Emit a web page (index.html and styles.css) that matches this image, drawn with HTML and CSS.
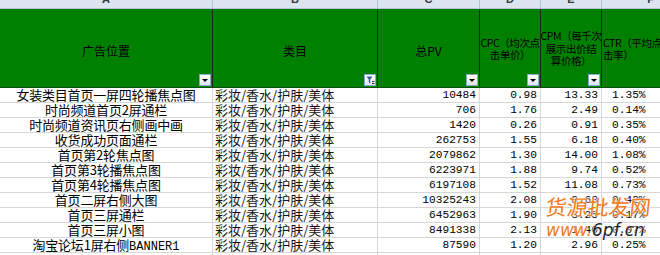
FILE: index.html
```html
<!DOCTYPE html>
<html lang="zh">
<head>
<meta charset="utf-8">
<link rel="stylesheet" href="styles.css">
</head>
<body>
<div class="sheet">
  <div class="colbar">
    <div class="colbar-inner">
      <div class="cl">A</div><div class="cl">B</div><div class="cl">C</div><div class="cl">D</div><div class="cl">E</div><div class="cl">F</div>
    </div>
  </div>
  <div class="row head">
    <div class="hc big">广告位置<span class="btn"><i class="tri"></i></span></div>
    <div class="hc big">类目<span class="btn"><svg width="9" height="9" viewBox="0 0 9 9"><path d="M0.5 0.5h6l-2.3 3v4l-1.4-1v-3z" fill="#3b5d8c"/><rect x="6" y="5" width="2.5" height="1" fill="#333"/><rect x="6" y="7" width="2.5" height="1" fill="#333"/></svg></span></div>
    <div class="hc big">总PV<span class="btn"><i class="tri"></i></span></div>
    <div class="hc small">CPC（均次点<br>击单价）<span class="btn"><i class="tri"></i></span></div>
    <div class="hc small">CPM（每千次<br>展示出价结<br>算价格）<span class="btn"><i class="tri"></i></span></div>
    <div class="hc small left">CTR（平均点<br>击率）<span class="btn"><i class="tri"></i></span></div>
  </div>
  <div class="row"><div class="c a">女装类目首页一屏四轮播焦点图</div><div class="c b">彩妆/香水/护肤/美体</div><div class="c n">10484</div><div class="c n">0.98</div><div class="c n">13.33</div><div class="c n f">1.35%</div></div>
  <div class="row"><div class="c a">时尚频道首页2屏通栏</div><div class="c b">彩妆/香水/护肤/美体</div><div class="c n">706</div><div class="c n">1.76</div><div class="c n">2.49</div><div class="c n f">0.14%</div></div>
  <div class="row"><div class="c a">时尚频道资讯页右侧画中画</div><div class="c b">彩妆/香水/护肤/美体</div><div class="c n">1420</div><div class="c n">0.26</div><div class="c n">0.91</div><div class="c n f">0.35%</div></div>
  <div class="row"><div class="c a">收货成功页面通栏</div><div class="c b">彩妆/香水/护肤/美体</div><div class="c n">262753</div><div class="c n">1.55</div><div class="c n">6.18</div><div class="c n f">0.40%</div></div>
  <div class="row"><div class="c a">首页第2轮焦点图</div><div class="c b">彩妆/香水/护肤/美体</div><div class="c n">2079862</div><div class="c n">1.30</div><div class="c n">14.00</div><div class="c n f">1.08%</div></div>
  <div class="row"><div class="c a">首页第3轮播焦点图</div><div class="c b">彩妆/香水/护肤/美体</div><div class="c n">6223971</div><div class="c n">1.88</div><div class="c n">9.74</div><div class="c n f">0.52%</div></div>
  <div class="row"><div class="c a">首页第4轮播焦点图</div><div class="c b">彩妆/香水/护肤/美体</div><div class="c n">6197108</div><div class="c n">1.52</div><div class="c n">11.08</div><div class="c n f">0.73%</div></div>
  <div class="row"><div class="c a">首页二屏右侧大图</div><div class="c b">彩妆/香水/护肤/美体</div><div class="c n">10325243</div><div class="c n">2.08</div><div class="c n">8.68</div><div class="c n f">0.42%</div></div>
  <div class="row"><div class="c a">首页三屏通栏</div><div class="c b">彩妆/香水/护肤/美体</div><div class="c n">6452963</div><div class="c n">1.90</div><div class="c n">3.25</div><div class="c n f">0.17%</div></div>
  <div class="row"><div class="c a">首页三屏小图</div><div class="c b">彩妆/香水/护肤/美体</div><div class="c n">8491338</div><div class="c n">2.13</div><div class="c n">1.40</div><div class="c n f">0.07%</div></div>
  <div class="row"><div class="c a">淘宝论坛1屏右侧<span class="mono">BANNER1</span></div><div class="c b">彩妆/香水/护肤/美体</div><div class="c n">87590</div><div class="c n">1.20</div><div class="c n">2.96</div><div class="c n f">0.25%</div></div>
  <div class="row"><div class="c a"></div><div class="c b"></div><div class="c n"></div><div class="c n"></div><div class="c n"></div><div class="c n f"></div></div>
  <div class="watermark">
    <div class="wm1">货源批发网</div>
    <div class="wm2">www.<span class="dark">6pf.cn</span></div>
  </div>
</div>
</body>
</html>
```
FILE: styles.css
```css
html, body {
  margin: 0;
  padding: 0;
  background: #fff;
  overflow: hidden;
}
.sheet {
  position: relative;
  width: 660px;
  height: 255px;
  overflow: hidden;
  font-family: "Noto Sans CJK SC", sans-serif;
  color: #000;
}
.colbar {
  height: 8px;
  overflow: hidden;
  background: #dce4ef;
  border-bottom: 1px solid #b4c2d6;
}
.colbar-inner {
  display: grid;
  grid-template-columns: 213px 165px 102px 61px 61px 98px;
  margin-top: -9px;
  height: 17px;
}
.cl {
  border-right: 1px solid #b4c2d6;
  text-align: center;
  font-family: "Liberation Sans", sans-serif;
  font-size: 11px;
  font-weight: bold;
  line-height: 17px;
  color: #3a3a3a;
}
.row {
  display: grid;
  grid-template-columns: 213px 165px 102px 61px 61px 98px;
  height: 15px;
}
.row.head {
  height: 79px;
  background: #008000;
}
.hc {
  position: relative;
  border-right: 1px solid #0f2f0f;
  border-bottom: 1px solid #0b4d0b;
  display: flex;
  align-items: center;
  justify-content: center;
  text-align: center;
  color: #000;
  white-space: nowrap;
}
.hc.big {
  font-size: 12px;
  padding-top: 4px;
}
.hc.small {
  font-size: 10.5px;
  line-height: 12.5px;
  padding-top: 2px;
  letter-spacing: -0.4px;
}
.hc.left {
  justify-content: flex-start;
  text-align: left;
  padding-left: 1px;
}
.btn {
  position: absolute;
  right: 1px;
  bottom: 1px;
  width: 10px;
  height: 10px;
  background: linear-gradient(#ffffff, #dbe6f4);
  border: 1px solid #8ea6c8;
  display: flex;
  align-items: center;
  justify-content: center;
}
.tri {
  width: 0;
  height: 0;
  border-left: 3px solid transparent;
  border-right: 3px solid transparent;
  border-top: 3px solid #000;
  margin-top: 1px;
}
.c {
  border-right: 1px solid #d6d6d6;
  border-bottom: 1px solid #d6d6d6;
  font-size: 13px;
  line-height: 14px;
  white-space: nowrap;
  overflow: hidden;
}
.c.a {
  text-align: center;
  letter-spacing: -0.2px;
}
.mono {
  font-family: "Liberation Mono", monospace;
  font-size: 12px;
  letter-spacing: 0;
}
.c.b {
  padding-left: 2px;
  color: #111;
}
.c.n {
  text-align: right;
  padding-right: 3px;
  font-family: "Liberation Mono", monospace;
  font-size: 11.2px;
}
.c.f {
  text-align: left;
  padding-left: 10px;
  padding-right: 0;
}
.watermark {
  position: absolute;
  left: 546px;
  top: 194px;
  color: #f27a1a;
  font-family: "Noto Sans CJK SC", sans-serif;
  text-shadow: 0 0 2px #fff, 0 0 2px #fff;
}
.wm1 {
  font-size: 21px;
  line-height: 24px;
  transform: skewX(-6deg);
}
.wm2 {
  font-family: "DejaVu Sans", sans-serif;
  font-size: 17px;
  line-height: 20px;
  font-style: italic;
  margin-top: 2px;
}
.dark {
  color: #222;
}
```
